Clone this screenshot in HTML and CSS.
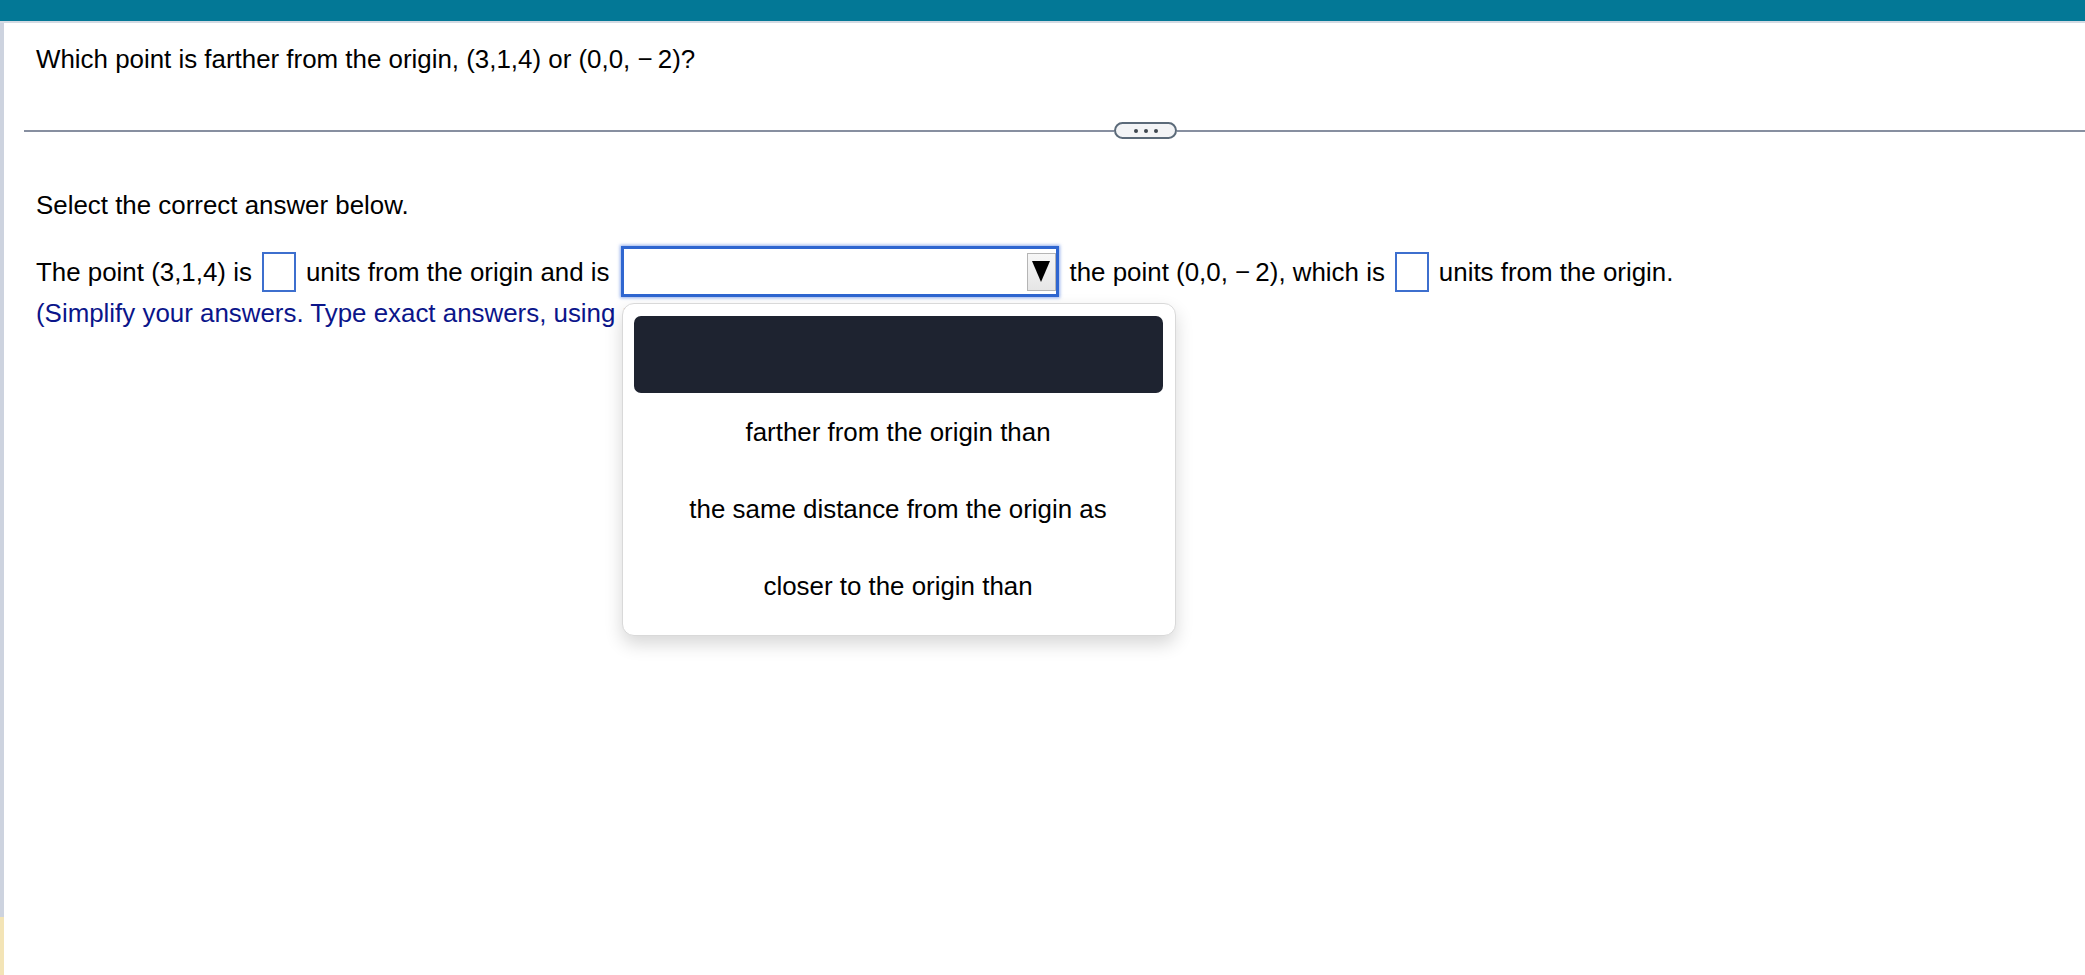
FILE: index.html
```html
<!DOCTYPE html>
<html lang="en">
<head>
<meta charset="utf-8">
<title>Question</title>
<link rel="stylesheet" href="styles.css">
</head>
<body>
<div class="topbar"></div>
<div class="page">
  <div class="rail"></div>
  <main class="content">
    <p class="question">Which point is farther from the origin, (3,1,4) or (0,0, &minus;&#8201;2)?</p>
    <div class="separator">
      <span class="sep-line sep-left"></span>
      <span class="pill"><i class="dot"></i><i class="dot"></i><i class="dot"></i></span>
      <span class="sep-line sep-right"></span>
    </div>
    <p class="instruction">Select the correct answer below.</p>
    <div class="answer-row">
      <span class="txt">The point (3,1,4) is</span>
      <span class="box"></span>
      <span class="txt">units from the origin and is</span>
      <span class="select">
        <span class="arrow-btn"><span class="tri"></span></span>
        <div class="menu">
          <div class="opt opt-active"></div>
          <div class="opt">farther from the origin than</div>
          <div class="opt">the same distance from the origin as</div>
          <div class="opt">closer to the origin than</div>
        </div>
      </span>
      <span class="txt">the point (0,0, &minus;&#8201;2), which is</span>
      <span class="box"></span>
      <span class="txt">units from the origin.</span>
    </div>
    <p class="hint">(Simplify your answers. Type exact answers, using radicals as needed.)</p>
  </main>
</div>
</body>
</html>
```

FILE: styles.css
```css
html, body {
  margin: 0;
  padding: 0;
  background: #ffffff;
}

body {
  font-family: "Liberation Sans", Arial, sans-serif;
  font-size: 25.9px;
  color: #000000;
  height: 975px;
  overflow: hidden;
}

.topbar {
  height: 21px;
  background: #037896;
  border-bottom: 2px solid #d3dae3;
}

.page {
  display: flex;
  height: 952px;
}

.rail {
  flex: 0 0 4px;
  background: linear-gradient(to bottom, #cdd3df 0, #cdd3df calc(100% - 58px), #f3e4b6 calc(100% - 58px), #f3e4b6 100%);
}

.content {
  flex: 1;
  padding: 15px 0 0 20px;
  min-width: 0;
}

.question,
.instruction,
.hint {
  margin: 0;
  padding-left: 12px;
  line-height: 42px;
  white-space: nowrap;
}

.separator {
  display: flex;
  align-items: center;
  margin-top: 42px;
  height: 17px;
}

.sep-line {
  height: 2px;
  background: #878fa0;
}

.sep-left {
  flex: 0 0 1090px;
}

.sep-right {
  flex: 1;
}

.pill {
  box-sizing: border-box;
  width: 63px;
  height: 17px;
  border: 2px solid #5b6a79;
  border-radius: 9px;
  background: #f3f4f6;
  display: flex;
  align-items: center;
  justify-content: center;
  gap: 6px;
}

.dot {
  width: 4px;
  height: 4px;
  border-radius: 50%;
  background: #3f4750;
}

.instruction {
  margin-top: 45px;
}

.answer-row {
  display: flex;
  align-items: center;
  height: 51px;
  margin-top: 20px;
  padding-left: 12px;
  white-space: nowrap;
}

.txt {
  line-height: 42px;
}

.box {
  box-sizing: border-box;
  width: 34px;
  height: 40px;
  border: 2px solid #3d6fce;
  margin: 0 10px;
  background: #fff;
}

.select {
  position: relative;
  box-sizing: border-box;
  width: 438px;
  height: 51px;
  margin: 0 11px;
  border: 3px solid #2f66d0;
  box-shadow: 0 0 3px 1px rgba(60, 110, 220, 0.55);
  background: #fff;
  display: flex;
  align-items: center;
  justify-content: flex-end;
}

.arrow-btn {
  box-sizing: border-box;
  width: 29px;
  height: 38px;
  border: 1px solid #b5b5b5;
  background: linear-gradient(to bottom, #f7f7f7, #e6e6e6);
  display: flex;
  align-items: center;
  justify-content: center;
}

.tri {
  width: 0;
  height: 0;
  border-left: 9px solid transparent;
  border-right: 9px solid transparent;
  border-top: 21px solid #000;
}

.menu {
  position: absolute;
  left: -2px;
  top: 54px;
  z-index: 5;
  box-sizing: border-box;
  width: 554px;
  padding: 12px 12px 11px 11px;
  background: #fff;
  border: 1.5px solid #d9d9d9;
  border-radius: 12px;
  box-shadow: 0 8px 18px rgba(0, 0, 0, 0.16);
}

.opt {
  height: 77px;
  display: flex;
  align-items: center;
  justify-content: center;
  line-height: 42px;
  color: #000;
}

.opt-active {
  background: #1e2330;
  border-radius: 7px;
}

.hint {
  color: #0b158a;
  line-height: 33px;
  margin-top: 0;
}
```
